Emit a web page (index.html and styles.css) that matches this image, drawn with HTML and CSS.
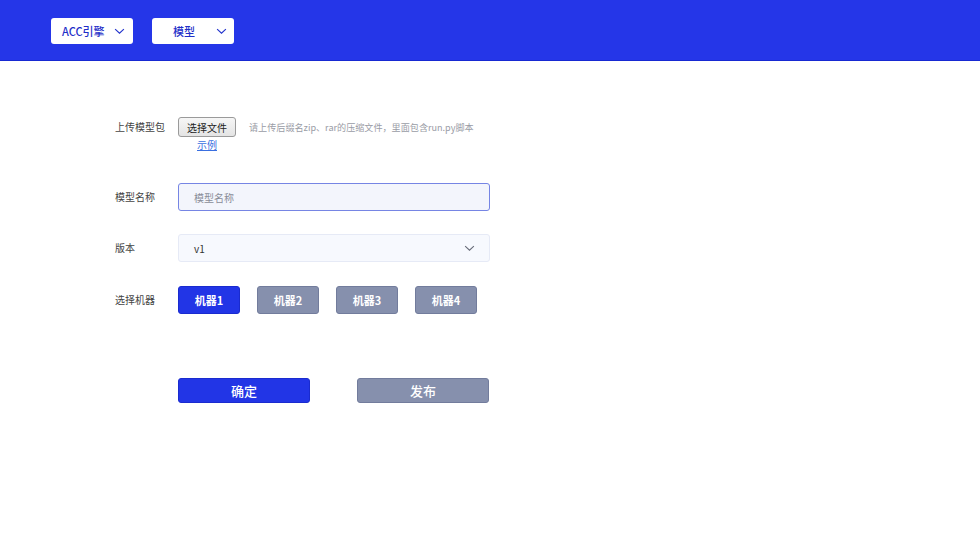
FILE: index.html
```html
<!DOCTYPE html>
<html lang="zh">
<head>
<meta charset="utf-8">
<link rel="stylesheet" href="styles.css">
</head>
<body>
<header class="topbar">
  <div class="dd dd-engine"><span class="dd-text">ACC引擎</span><svg class="chev" viewBox="0 0 12 8" width="11" height="7"><path d="M1 1.2 L6 6 L11 1.2" fill="none" stroke="#2233cc" stroke-width="1.3"/></svg></div>
  <div class="dd dd-model"><span class="dd-text">模型</span><svg class="chev" viewBox="0 0 12 8" width="11" height="7"><path d="M1 1.2 L6 6 L11 1.2" fill="none" stroke="#2233cc" stroke-width="1.3"/></svg></div>
</header>
<main class="form">
  <div class="row row-upload">
    <div class="label">上传模型包</div>
    <div class="field">
      <div class="upload-line">
        <button class="file-btn">选择文件</button>
        <span class="hint">请上传后缀名zip、rar的压缩文件，里面包含run.py脚本</span>
      </div>
      <a class="example">示例</a>
    </div>
  </div>
  <div class="row row-name">
    <div class="label">模型名称</div>
    <div class="field"><div class="input"><span class="ph">模型名称</span></div></div>
  </div>
  <div class="row row-ver">
    <div class="label">版本</div>
    <div class="field"><div class="select"><span class="val">v1</span><svg viewBox="0 0 12 8" width="11" height="7"><path d="M1 1.2 L6 6 L11 1.2" fill="none" stroke="#666a78" stroke-width="1.2"/></svg></div></div>
  </div>
  <div class="row row-mach">
    <div class="label">选择机器</div>
    <div class="field machines">
      <button class="mbtn on">机器1</button>
      <button class="mbtn">机器2</button>
      <button class="mbtn">机器3</button>
      <button class="mbtn">机器4</button>
    </div>
  </div>
  <div class="actions">
    <button class="abtn primary">确定</button>
    <button class="abtn gray">发布</button>
  </div>
</main>
</body>
</html>
```
FILE: styles.css
```css
* { box-sizing: border-box; }
body {
  margin: 0;
  background: #fff;
  font-family: "Noto Sans CJK SC", "Noto Sans", sans-serif;
  color: #333;
}
.topbar {
  height: 61px;
  background: #2536e8;
  border-bottom: 1px solid #1729d2;
  display: flex;
  align-items: flex-start;
  padding: 18px 0 0 51px;
  gap: 19px;
}
.dd {
  width: 82px;
  height: 26px;
  background: #fff;
  border-radius: 3px;
  display: flex;
  align-items: center;
  color: #1f2fc8;
  font-size: 11px;
  font-weight: 500;
}
.dd-engine { padding-left: 11px; }
.dd-engine .chev { margin-left: 9px; }
.dd-model { padding-left: 21px; }
.dd-model .chev { margin-left: 21px; }
.dd-text { line-height: 1; }

.form { padding: 56px 0 0 115px; }
.row { display: flex; }
.label { width: 63px; font-size: 10px; color: #444; line-height: 1; }
.field { display: flex; flex-direction: column; }

.row-upload .label { padding-top: 5px; }
.upload-line { display: flex; align-items: center; }
.file-btn {
  width: 58px; height: 20px;
  font-family: inherit; font-size: 10px; color: #222;
  background: linear-gradient(#f6f6f6, #e4e4e4);
  border: 1px solid #9a9a9a;
  border-radius: 3px;
  padding: 0;
}
.hint { margin-left: 13px; font-size: 9.1px; color: #9a9ca6; }
.example {
  margin: 1px 0 0 19px;
  font-size: 10px; color: #3a6fe0;
  text-decoration: underline;
  line-height: 14px;
}

.row-name { margin-top: 31px; }
.row-name .label, .row-ver .label, .row-mach .label { padding-top: 9px; }
.input {
  width: 312px; height: 28px;
  background: #f3f5fc;
  border: 1px solid #7685e4;
  border-radius: 3px;
  display: flex; align-items: center;
  padding-left: 15px;
}
.ph { font-size: 10px; color: #8a8d99; }

.row-ver { margin-top: 23px; }
.select {
  width: 312px; height: 28px;
  background: #f7f9fe;
  border: 1px solid #e6eaf6;
  border-radius: 3px;
  display: flex; align-items: center; justify-content: space-between;
  padding: 0 14px 0 15px;
}
.val { font-size: 10px; color: #333; }

.row-mach { margin-top: 24px; }
.machines { flex-direction: row; gap: 17px; }
.mbtn {
  width: 62px; height: 28px;
  border-radius: 3px;
  font-family: inherit; font-size: 11px; font-weight: 700;
  color: #fff;
  background: #8690ad;
  border: 1px solid #727c9c;
  padding: 0;
}
.mbtn.on { background: #2235e6; border-color: #1a2bcf; }

.actions { display: flex; gap: 47px; margin: 64px 0 0 63px; }
.abtn {
  width: 132px; height: 25px;
  border-radius: 3px;
  font-family: inherit; font-size: 13px; font-weight: 500;
  color: #fff; padding: 0;
}
.abtn.primary { background: #2235e6; border: 1px solid #1a2bcf; }
.abtn.gray { background: #8690ad; border: 1px solid #727c9c; }
```
